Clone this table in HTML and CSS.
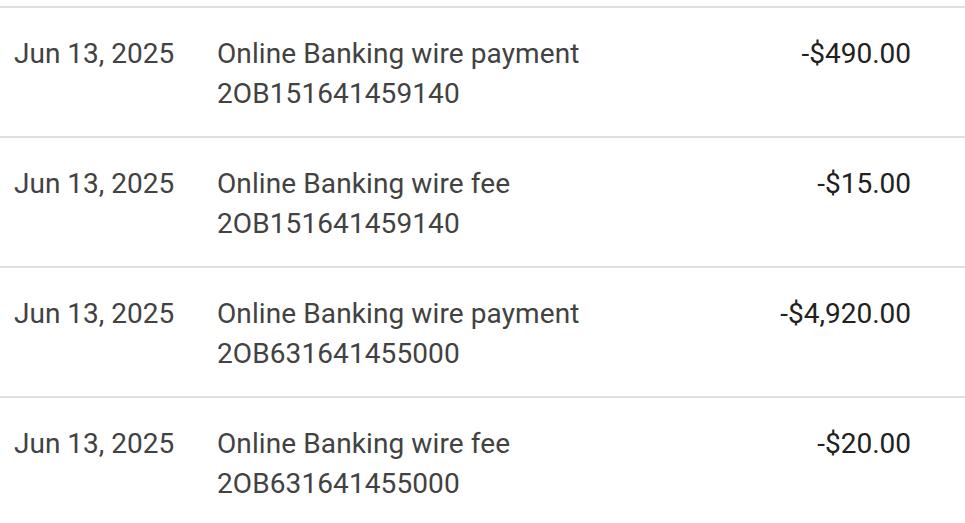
FILE: index.html
```html
<!DOCTYPE html>
<html>
<head>
<meta charset="utf-8">
<link rel="stylesheet" href="styles.css">
</head>
<body>
<div class="list">
  <div class="row">
    <div class="date">Jun 13, 2025</div>
    <div class="desc"><div>Online Banking wire payment</div><div>2OB151641459140</div></div>
    <div class="amount">-$490.00</div>
  </div>
  <div class="row">
    <div class="date">Jun 13, 2025</div>
    <div class="desc"><div>Online Banking wire fee</div><div>2OB151641459140</div></div>
    <div class="amount">-$15.00</div>
  </div>
  <div class="row">
    <div class="date">Jun 13, 2025</div>
    <div class="desc"><div>Online Banking wire payment</div><div>2OB631641455000</div></div>
    <div class="amount">-$4,920.00</div>
  </div>
  <div class="row">
    <div class="date">Jun 13, 2025</div>
    <div class="desc"><div>Online Banking wire fee</div><div>2OB631641455000</div></div>
    <div class="amount">-$20.00</div>
  </div>
</div>
</body>
</html>
```
FILE: styles.css
```css
html, body {
  margin: 0;
  padding: 0;
  background: #ffffff;
}
body {
  font-family: Roboto, "Liberation Sans", sans-serif;
  font-size: 28px;
  line-height: 40px;
  color: #424242;
}
.list {
  padding-top: 6px;
}
.row {
  display: flex;
  border-top: 2px solid #e0e0e0;
  padding: 26px 54px 0 14px;
  box-sizing: border-box;
  height: 130px;
}
.date {
  width: 204px;
  flex: none;
}
.desc {
  flex: 1;
  margin-left: -1px;
  letter-spacing: 0.1px;
}
.amount {
  text-align: right;
  color: #212121;
}
```
